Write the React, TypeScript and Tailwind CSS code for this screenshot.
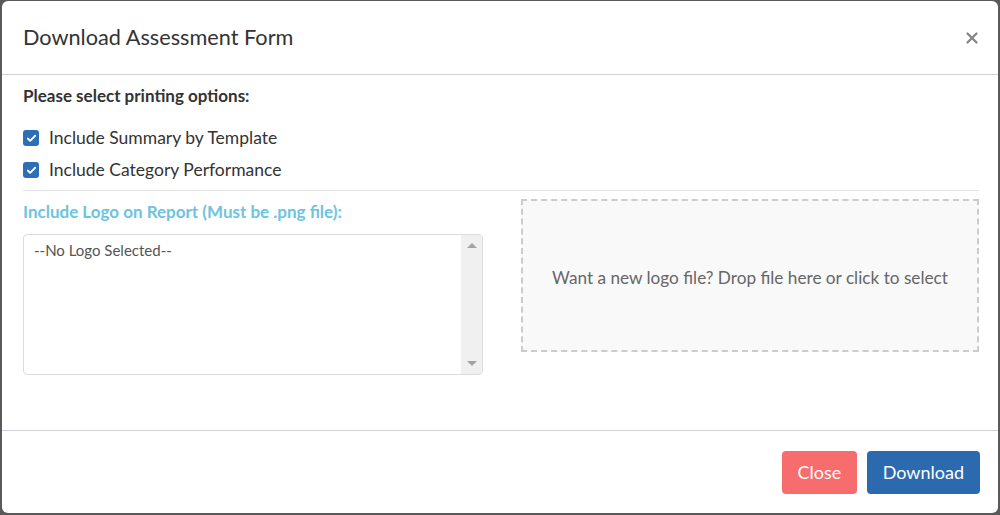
import { Check, X } from 'lucide-react'

function CheckRow({ label }: { label: string }) {
  return (
    <label className="flex items-center gap-[10px] h-[32px]">
      <span className="w-[16px] h-[16px] rounded-[3px] bg-[#2e6db8] flex items-center justify-center">
        <Check className="w-[11px] h-[11px] text-white" strokeWidth={4} />
      </span>
      <span className="text-[17.5px] text-[#333]">{label}</span>
    </label>
  )
}

export default function App() {
  return (
    <div className="w-[1000px] h-[515px] bg-[#5a5a5a] pl-[2px] pt-[1px] pr-[2px] pb-[2px] font-['Lato',sans-serif]">
      <div className="h-full bg-white rounded-[6px] flex flex-col">
        <div className="h-[74px] border-b border-[#d0d4d8] flex items-center justify-between pl-[21px] pr-[17px]">
          <h4 className="text-[21.7px] text-[#333]">Download Assessment Form</h4>
          <X className="w-[18px] h-[18px] text-[#888]" strokeWidth={3.2} />
        </div>

        <div className="h-[355px] pl-[21px] pr-[19px] pt-[10px]">
          <div className="text-[17px] font-bold text-[#333] leading-[22px]">Please select printing options:</div>
          <div className="mt-[15px] flex flex-col">
            <CheckRow label="Include Summary by Template" />
            <CheckRow label="Include Category Performance" />
          </div>
          <div className="mt-[4px] border-t border-[#e3e3e3]" />
          <div className="flex gap-[38px] mt-[8px]">
            <div className="w-[460px]">
              <div className="text-[17px] font-bold text-[#6ec3e0] leading-[22px] mt-[2px]">
                Include Logo on Report (Must be .png file):
              </div>
              <div className="mt-[11px] h-[141px] border border-[#dcdcdc] rounded-[4px] flex overflow-hidden">
                <div className="flex-1 pl-[10px] pt-[4px] text-[15px] text-[#555]">--No Logo Selected--</div>
                <div className="w-[21px] bg-[#f0f0f0] flex flex-col items-center justify-between py-[8px]">
                  <span className="w-0 h-0 border-l-[5px] border-r-[5px] border-b-[5px] border-l-transparent border-r-transparent border-b-[#a3a3a3]" />
                  <span className="w-0 h-0 border-l-[5px] border-r-[5px] border-t-[5px] border-l-transparent border-r-transparent border-t-[#a3a3a3]" />
                </div>
              </div>
            </div>
            <div className="flex-1 h-[153px] border-2 border-dashed border-[#cccccc] bg-[#f9f9f9] flex items-center justify-center pt-[4px]">
              <span className="text-[17.2px] text-[#666]">
                Want a new logo file? Drop file here or click to select
              </span>
            </div>
          </div>
        </div>

        <div className="border-t border-[#d0d4d8] flex-1 flex justify-end items-start gap-[10px] pr-[18px] pt-[20px]">
          <button className="h-[43px] px-[15.5px] rounded-[4px] bg-[#f76c6c] text-white text-[18px]">Close</button>
          <button className="h-[43px] px-[16px] rounded-[4px] bg-[#2c6ab0] text-white text-[18px]">Download</button>
        </div>
      </div>
    </div>
  )
}
